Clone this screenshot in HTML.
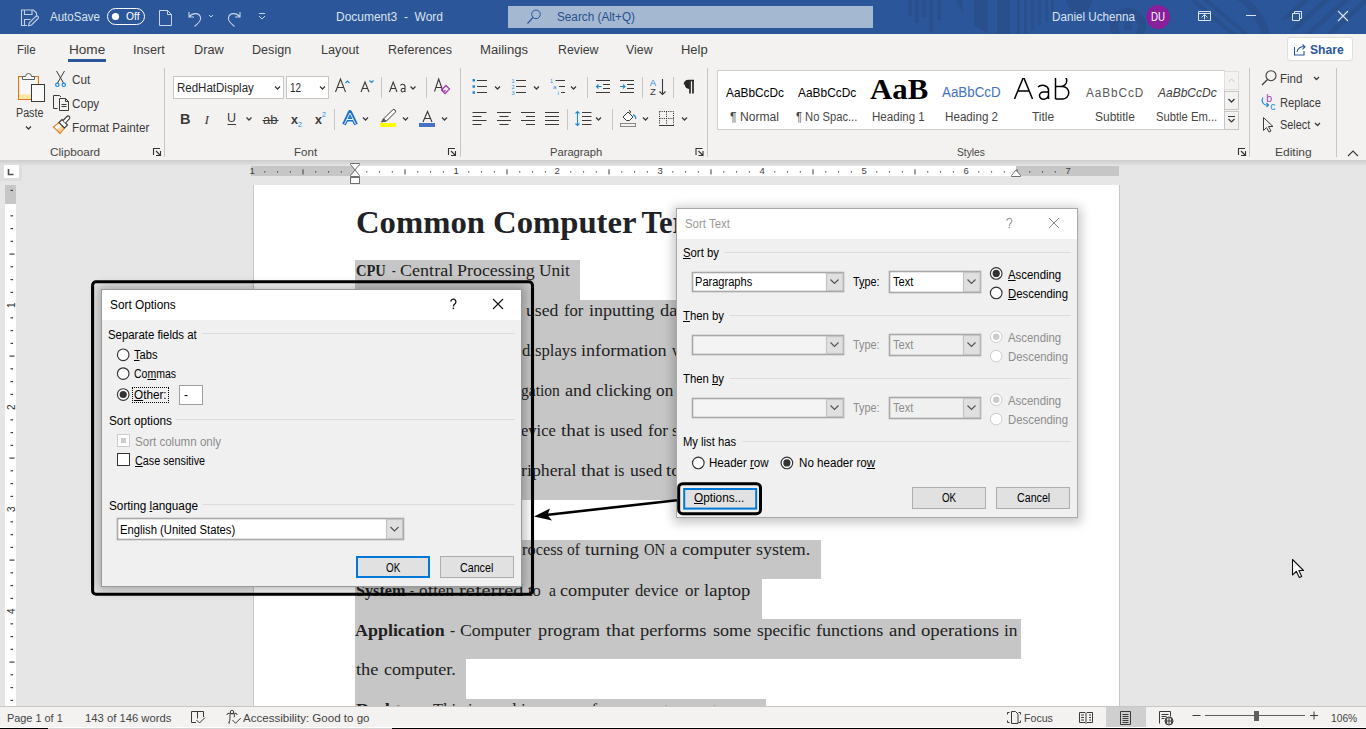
<!DOCTYPE html>
<html><head><meta charset="utf-8">
<style>
*{margin:0;padding:0;box-sizing:border-box}
html,body{width:1366px;height:729px;overflow:hidden;background:#e6e6e6;font-family:"Liberation Sans",sans-serif;color:#262626}
.a{position:absolute}
.t{position:absolute;white-space:nowrap;line-height:1}
#title{left:0;top:0;width:1366px;height:34px;background:#2b579a}
#tabs{left:0;top:34px;width:1366px;height:32px;background:#f3f2f1}
#ribbon{left:0;top:66px;width:1366px;height:94px;background:#f3f2f1}
#status{left:0;top:706px;width:1366px;height:23px;background:#f3f2f1;border-top:1px solid #c8c6c4}
.tw{color:#fff;font-size:12px}
.tab{font-size:12.5px;color:#3b3a39;top:43px}
.glab{font-size:11.5px;color:#484644;top:146px}
.sep{position:absolute;width:1px;background:#c8c6c4}
.page{background:#fff}
.dw{font-family:"Liberation Serif",serif;color:#222}
.hl{position:absolute;background:#c6c6c6}
</style></head><body>
<div id="title" class="a">
<svg class="a" style="left:0;top:0" width="1366" height="34">
 <g fill="#294f8c">
  <rect x="908" y="0" width="4" height="16"/><rect x="915" y="0" width="4" height="23"/><rect x="922" y="0" width="4" height="17"/><rect x="929" y="0" width="4" height="32"/><rect x="937" y="0" width="4" height="20"/>
  <path d="M956 0 L963 0 L963 13.5 Z"/>
  <path d="M974 0 L987.5 0 L987.5 34 L974 25 Z"/>
  <rect x="997" y="0" width="13" height="34"/>
  <rect x="1017" y="0" width="3" height="34"/><rect x="1024" y="0" width="3" height="34"/><rect x="1031" y="0" width="3" height="30"/><rect x="1038" y="0" width="3" height="26"/><rect x="1045" y="0" width="3" height="21"/><rect x="1051" y="0" width="3" height="14"/>
  <circle cx="1079" cy="0" r="13"/>
  <circle cx="1128" cy="26" r="14" fill="none" stroke="#294f8c" stroke-width="8"/>
  <circle cx="1128" cy="26" r="4"/>
  <path d="M1173 0 A60 60 0 0 1 1270 34 L1261 34 A52 52 0 0 0 1183 0 Z"/>
  <path d="M1190 0 L1196 0 L1236 34 L1230 34 Z"/><path d="M1203 0 L1209 0 L1249 34 L1243 34 Z"/>
  <path d="M1280 20 L1302 0 L1309 0 L1287 20 Z"/><path d="M1290 30 L1323 0 L1330 0 L1297 30 Z"/><path d="M1305 34 L1342 0 L1349 0 L1312 34 Z"/><path d="M1326 34 L1363 0 L1366 0 L1366 4 L1333 34 Z"/>
 </g>
 <!-- save icon -->
 <g fill="none" stroke="#c3cfe4" stroke-width="1.1">
  <path d="M27 25.5 h-5.5 v-15.5 h12 l3 3 v4"/>
  <path d="M24.5 10 v4.5 h7.5 v-4.5"/>
  <path d="M24.5 25.5 v-6 h6"/>
  <path d="M28.5 25.8 l0.8 -3 l6.5 -6.5 a1.5 1.5 0 0 1 2.2 2.2 l-6.5 6.5 z"/>
 </g>
 <!-- toggle -->
 <rect x="107.5" y="8.5" width="37" height="16" rx="8" fill="none" stroke="#fff" stroke-width="1"/>
 <circle cx="115.5" cy="16.5" r="3.6" fill="#fff"/>
 <!-- new doc -->
 <path d="M159.5 10.5 h8 l4 4 v11 h-12 z M167.5 10.5 v4 h4" fill="none" stroke="#c9d5ea"/>
 <!-- undo -->
 <path d="M189 12 v5 h5 M189.5 16.5 c3 -4 10 -4 11 1 c1 4 -3 6 -6 9" fill="none" stroke="#c9d5ea" stroke-width="1.1"/>
 <path d="M209 15 l2 2 l2 -2" fill="none" stroke="#c9d5ea"/>
 <!-- redo -->
 <path d="M240 12 v5 h-5 M239.5 16.5 c-3 -4 -10 -4 -11 1 c-1 4 3 6 6 9" fill="none" stroke="#c9d5ea" stroke-width="1.1"/>
 <!-- customize -->
 <path d="M259 13.5 h6 M259 16 l3 3 l3 -3" fill="none" stroke="#c9d5ea"/>
 <!-- search box -->
 <rect x="508" y="6" width="365" height="22" fill="#a5b8d2"/>
 <circle cx="536" cy="14.3" r="4.3" fill="none" stroke="#2b579a" stroke-width="1"/>
 <path d="M533 17.5 L527.5 23.5" stroke="#2b579a" stroke-width="1.2"/>
 <!-- avatar -->
 <circle cx="1158" cy="17" r="12" fill="#8b1e9b"/>
 <!-- ribbon display -->
 <path d="M1198.5 11.5 h12 v9 h-12 z M1198.5 13.5 h12 M1201.5 17.5 l3 -3 l3 3 M1204.5 14.5 v5" fill="none" stroke="#dbe3f0" stroke-width="1"/>
 <path d="M1246 15.5 h10" stroke="#dbe3f0"/>
 <path d="M1292.5 13.5 h7 v7 h-7 z M1294.5 13.5 v-2 h7 v7 h-2" fill="none" stroke="#dbe3f0"/>
 <path d="M1338 11 l10 10 M1348 11 l-10 10" stroke="#dbe3f0" stroke-width="1.1"/>
</svg>
<span class="t tw" style="left:50px;top:10.5px;font-size:12.5px;color:#dbe3f0;transform:scaleX(0.9222);transform-origin:0 0">AutoSave</span>
<span class="t tw" style="left:125.5px;top:11px;font-size:11.5px;transform:scaleX(0.8916);transform-origin:0 0">Off</span>
<span class="t tw" style="left:336px;top:10.5px;font-size:12.5px;color:#dbe3f0;transform:scaleX(0.9586);transform-origin:0 0">Document3&nbsp; -&nbsp; Word</span>
<span class="t tw" style="left:557px;top:10.5px;font-size:12.5px;color:#27508f;transform:scaleX(0.9396);transform-origin:0 0">Search (Alt+Q)</span>
<span class="t tw" style="left:1052px;top:10.5px;font-size:12.5px;color:#dbe3f0;transform:scaleX(0.9331);transform-origin:0 0">Daniel Uchenna</span>
<span class="t tw" style="left:1151px;top:11px;font-size:12px;color:#fff;transform:scaleX(0.8072);transform-origin:0 0">DU</span>
</div>
<div id="tabs" class="a"></div>
<div id="ribbon" class="a"></div>
<span class="t" style="left:17px;top:44.42px;font-size:12.5px;color:#3b3a39;transform:scaleX(0.9228);transform-origin:0 0">File</span>
<span class="t" style="left:68.5px;top:44.42px;font-size:12.5px;color:#3b3a39;transform:scaleX(1.0857);transform-origin:0 0">Home</span>
<span class="t" style="left:133px;top:44.42px;font-size:12.5px;color:#3b3a39;transform:scaleX(1.0139);transform-origin:0 0">Insert</span>
<span class="t" style="left:194.3px;top:44.42px;font-size:12.5px;color:#3b3a39;transform:scaleX(1.0181);transform-origin:0 0">Draw</span>
<span class="t" style="left:252.3px;top:44.42px;font-size:12.5px;color:#3b3a39;transform:scaleX(1.0071);transform-origin:0 0">Design</span>
<span class="t" style="left:321px;top:44.42px;font-size:12.5px;color:#3b3a39;transform:scaleX(1.0125);transform-origin:0 0">Layout</span>
<span class="t" style="left:388px;top:44.42px;font-size:12.5px;color:#3b3a39;transform:scaleX(1.0010);transform-origin:0 0">References</span>
<span class="t" style="left:480.4px;top:44.42px;font-size:12.5px;color:#3b3a39;transform:scaleX(1.0489);transform-origin:0 0">Mailings</span>
<span class="t" style="left:557.8px;top:44.42px;font-size:12.5px;color:#3b3a39;transform:scaleX(0.9854);transform-origin:0 0">Review</span>
<span class="t" style="left:626.2px;top:44.42px;font-size:12.5px;color:#3b3a39;transform:scaleX(0.9898);transform-origin:0 0">View</span>
<span class="t" style="left:681px;top:44.42px;font-size:12.5px;color:#3b3a39;transform:scaleX(1.0382);transform-origin:0 0">Help</span>
<div class="a" style="left:68px;top:59px;width:38px;height:3px;background:#2b579a"></div>
<div class="a" style="left:1287px;top:37px;width:66px;height:24px;background:#fff;border:1px solid #e1dfdd;border-radius:3px"></div>
<span class="t" style="left:1310px;top:44.42px;font-size:12.5px;color:#2b579a;font-weight:bold;transform:scaleX(0.9698);transform-origin:0 0">Share</span>
<span class="t" style="left:49.5px;top:147.27px;font-size:11.5px;color:#484644;transform:scaleX(1.0176);transform-origin:0 0">Clipboard</span>
<span class="t" style="left:293.5px;top:147.27px;font-size:11.5px;color:#484644;transform:scaleX(1.0037);transform-origin:0 0">Font</span>
<span class="t" style="left:550.4px;top:147.27px;font-size:11.5px;color:#484644;transform:scaleX(0.9717);transform-origin:0 0">Paragraph</span>
<span class="t" style="left:956.5px;top:147.27px;font-size:11.5px;color:#484644;transform:scaleX(0.8906);transform-origin:0 0">Styles</span>
<span class="t" style="left:1275px;top:147.27px;font-size:11.5px;color:#484644;transform:scaleX(1.0434);transform-origin:0 0">Editing</span>
<span class="t" style="left:15.6px;top:107.42px;font-size:12.5px;color:#3b3a39;transform:scaleX(0.8571);transform-origin:0 0">Paste</span>
<span class="t" style="left:71.7px;top:74.42px;font-size:12.5px;color:#3b3a39;transform:scaleX(0.9407);transform-origin:0 0">Cut</span>
<span class="t" style="left:71.7px;top:98.42px;font-size:12.5px;color:#3b3a39;transform:scaleX(0.9319);transform-origin:0 0">Copy</span>
<span class="t" style="left:71.7px;top:122.42px;font-size:12.5px;color:#3b3a39;transform:scaleX(0.9362);transform-origin:0 0">Format Painter</span>
<div class="a" style="left:173px;top:76px;width:111px;height:23px;background:#fff;border:1px solid #c8c6c4"></div>
<div class="a" style="left:286px;top:76px;width:43px;height:23px;background:#fff;border:1px solid #c8c6c4"></div>
<span class="t" style="left:176.5px;top:82.42px;font-size:12.5px;color:#262626;transform:scaleX(0.9211);transform-origin:0 0">RedHatDisplay</span>
<span class="t" style="left:289.6px;top:82.42px;font-size:12.5px;color:#262626;transform:scaleX(0.7910);transform-origin:0 0">12</span>
<div class="a" style="left:717px;top:70px;width:522px;height:60px;background:#fff;border:1px solid #d2d0ce"></div>
<div class="a" style="left:1224px;top:70px;width:15px;height:60px;background:#f3f2f1;border-left:1px solid #d2d0ce"></div>
<div class="a" style="left:1224px;top:71px;width:14.5px;height:19px;background:#f3f2f1;border:1px solid #e1dfdd"></div>
<div class="a" style="left:1224px;top:91px;width:14.5px;height:18.5px;background:#f3f2f1;border:1px solid #c8c6c4"></div>
<div class="a" style="left:1224px;top:110.5px;width:14.5px;height:19px;background:#f3f2f1;border:1px solid #c8c6c4"></div>
<span class="t" style="left:729.6px;top:111.42px;font-size:12.5px;color:#484644;transform:scaleX(0.9706);transform-origin:0 0">&para; Normal</span>
<span class="t" style="left:796.2px;top:111.42px;font-size:12.5px;color:#484644;transform:scaleX(0.8941);transform-origin:0 0">&para; No Spac...</span>
<span class="t" style="left:872.4px;top:111.42px;font-size:12.5px;color:#484644;transform:scaleX(0.9246);transform-origin:0 0">Heading 1</span>
<span class="t" style="left:944.5px;top:111.42px;font-size:12.5px;color:#484644;transform:scaleX(0.9316);transform-origin:0 0">Heading 2</span>
<span class="t" style="left:1032.3px;top:111.42px;font-size:12.5px;color:#484644;transform:scaleX(0.9544);transform-origin:0 0">Title</span>
<span class="t" style="left:1095.3px;top:111.42px;font-size:12.5px;color:#484644;transform:scaleX(0.9568);transform-origin:0 0">Subtitle</span>
<span class="t" style="left:1156.2px;top:111.42px;font-size:12.5px;color:#484644;transform:scaleX(0.8988);transform-origin:0 0">Subtle Em...</span>
<span class="t" style="left:726px;top:86.00px;font-size:13.5px;color:#000;transform:scaleX(0.8784);transform-origin:0 0">AaBbCcDc</span>
<span class="t" style="left:797.7px;top:86.00px;font-size:13.5px;color:#000;transform:scaleX(0.8829);transform-origin:0 0">AaBbCcDc</span>
<span class="t" style="left:870.2px;top:73.6px;font-size:30px;color:#000;font-family:'Liberation Serif',serif;font-weight:bold;transform:scaleX(1.0267);transform-origin:0 0">AaB</span>
<span class="t" style="left:941.6px;top:85.15px;font-size:14px;color:#4472c4;transform:scaleX(0.9550);transform-origin:0 0">AaBbCcD</span>
<svg class="a" style="left:1005px;top:78px" width="75" height="24"><g fill="none" stroke="#000" stroke-width="1.5">
<path d="M9.5 21 L18.5 -1 L27.5 21 M13 13 h11"/>
<path d="M33 9 a6 5 0 0 1 10.5 2.5 v9.5 M43.5 14 h-5 a4 3.6 0 0 0 0 7.2 a5 5 0 0 0 5 -4"/>
<path d="M50.5 21 V-3 M50.5 -3 h5.5 a5.6 5.6 0 0 1 0 11.5 h-5.5 M50.5 8.5 h7 a6.2 6.2 0 0 1 0 12.5 h-7"/>
</g></svg>
<span class="t" style="left:1085.7px;top:87.42px;font-size:12.5px;color:#595959;letter-spacing:1px;transform:scaleX(0.9420);transform-origin:0 0">AaBbCcD</span>
<span class="t" style="left:1157.6px;top:86.00px;font-size:13.5px;color:#404040;font-style:italic;transform:scaleX(0.8890);transform-origin:0 0">AaBbCcDc</span>
<span class="t" style="left:1280.4px;top:73.42px;font-size:12.5px;color:#3b3a39;transform:scaleX(0.9207);transform-origin:0 0">Find</span>
<span class="t" style="left:1280.4px;top:97.42px;font-size:12.5px;color:#3b3a39;transform:scaleX(0.8916);transform-origin:0 0">Replace</span>
<span class="t" style="left:1280.4px;top:119.42px;font-size:12.5px;color:#3b3a39;transform:scaleX(0.8691);transform-origin:0 0">Select</span>
<div class="sep" style="left:164px;top:68px;height:89px"></div>
<div class="sep" style="left:460px;top:68px;height:89px"></div>
<div class="sep" style="left:707px;top:68px;height:89px"></div>
<div class="sep" style="left:1249px;top:68px;height:89px"></div>
<div class="sep" style="left:1336px;top:68px;height:89px"></div>
<svg class="a" style="left:0;top:0" width="1366" height="180">
<g fill="none" stroke-width="1">
 <!-- paste -->
 <rect x="18.5" y="76.5" width="20" height="23" fill="#fbe6a6" stroke="#e2761b"/>
 <rect x="19.5" y="77.5" width="18" height="17" fill="#f7f7f7" stroke="none"/>
 <path d="M22.5 79.5 v-3 h3 a2.5 2.5 0 0 1 6 0 h3 v3 z" fill="#f7f7f7" stroke="#5f5f5f"/>
 <rect x="31.5" y="84.5" width="13" height="17" fill="#fafafa" stroke="#3b3a39"/>
 <path d="M26 126.5 l2.5 2.5 l2.5 -2.5" stroke="#3b3a39" stroke-width="1.25"/>
 <!-- cut -->
 <path d="M56.5 71 L63.5 83 M64.5 71 L57.5 83" stroke="#3b3a39"/>
 <circle cx="57.3" cy="84.8" r="1.7" stroke="#1e8bdc" stroke-width="1.2"/>
 <circle cx="63.8" cy="84.8" r="1.7" stroke="#1e8bdc" stroke-width="1.2"/>
 <!-- copy -->
 <path d="M57.5 108.5 h-4 v-13 h6 l1.5 1.5" stroke="#3b3a39"/>
 <path d="M59.5 98.5 h6 l3 3 v9 h-9 z M65.5 98.5 v3 h3 M61.5 104.5 h5 M61.5 106.5 h5" stroke="#3b3a39"/>
 <!-- format painter -->
 <path d="M53.5 127 L59 122.5 L64.5 128 L60 133.5 Z" fill="#f9d29b" stroke="#e2761b" stroke-width="1.1"/>
 <path d="M54.5 127 L59 123.5 L61.5 126 L56.5 129.5 Z" fill="#fff" stroke="none"/>
 <path d="M59 122.5 L62 119.5 L67.5 125 L64.5 128 Z" fill="#fff" stroke="#3b3a39" stroke-width="1.1"/>
 <path d="M63 120.5 L67 116.5 A1.5 1.5 0 0 1 69.3 118.8 L65.5 123" fill="#fff" stroke="#3b3a39" stroke-width="1.1"/>
 <!-- font combo chevrons -->
 <path d="M275 86.5 l2.5 2.5 l2.5 -2.5 M320 86.5 l2.5 2.5 l2.5 -2.5" stroke="#3b3a39" stroke-width="1.25"/>
 <!-- grow/shrink -->
 <path d="M335.5 92 L340.5 79 L345.5 92 M337.3 87.5 h6.4" stroke="#3b3a39" stroke-width="1.1"/>
 <path d="M345.5 83 l2 -2 l2 2" stroke="#1e8bdc" stroke-width="1.2"/>
 <path d="M361 92 L365 82 L369 92 M362.5 88.5 h5" stroke="#3b3a39" stroke-width="1.1"/>
 <path d="M369.5 80.5 l2 2 l2 -2" stroke="#1e8bdc" stroke-width="1.2"/>
 <path d="M381.5 77 v21" stroke="#c8c6c4"/>
 <path d="M389.5 92 L393.2 82 L397 92 M390.8 88.5 h5" stroke="#3b3a39" stroke-width="1.1"/>
 <path d="M400.5 85.5 a2.5 2.5 0 0 1 4.5 0.5 v6 M405 88.5 h-2.5 a1.8 1.8 0 0 0 0 3.5 a2.5 2.5 0 0 0 2.5 -2" stroke="#3b3a39" stroke-width="1.1"/>
 <path d="M410.5 86.5 l2.5 2.5 l2.5 -2.5" stroke="#3b3a39" stroke-width="1.25"/>
 <path d="M426.5 77 v21" stroke="#c8c6c4"/>
 <path d="M434.5 91.5 L438.7 79 L443 91.5 M436 87.5 h5" stroke="#3b3a39" stroke-width="1.1"/>
 <path d="M441.5 90 L446 85.5 L449.5 89 L445 93.5 Z M443.5 92 l2 -2" stroke="#a33bb5" stroke-width="1.3"/>
 <!-- row 2 -->
 <path d="M334.5 109 v21" stroke="#c8c6c4"/>
 <path d="M246.5 117.5 l2.5 2.5 l2.5 -2.5 M363 117.5 l2.5 2.5 l2.5 -2.5 M403 117.5 l2.5 2.5 l2.5 -2.5 M442 117.5 l2.5 2.5 l2.5 -2.5" stroke="#3b3a39" stroke-width="1.25"/>
 <path d="M227.5 124.5 h8.5" stroke="#3b3a39"/>
 <path d="M262.5 120.5 h16" stroke="#3b3a39"/>
 <path d="M344 124.5 L350 112 L356 124.5 M346.8 119.5 h6.4" stroke="#1a6fc9" stroke-width="4" stroke-linejoin="round"/>
 <path d="M344.5 124 L350 113 L355.5 124 M347 119.5 h6" stroke="#e8f3fd" stroke-width="1"/>
 <path d="M382 121.5 l2 -3 l8.5 -8.5 a1.5 1.5 0 0 1 2.5 2.5 l-8.5 8.5 z" fill="#fff" stroke="#3b3a39"/>
 <path d="M381.5 122 l2 -3.5 l2.5 2.5 z" fill="#5f5f5f" stroke="#5f5f5f"/>
 <rect x="380" y="123" width="16" height="4" fill="#ffff00" stroke="none"/>
 <path d="M423 122 L427.5 111.5 L432 122 M424.5 118.5 h6" stroke="#3b3a39" stroke-width="1.1"/>
 <rect x="419" y="123" width="16" height="4" fill="#4472c4" stroke="none"/>
 <!-- paragraph row1 -->
 <g fill="#1e8bdc" stroke="none"><rect x="472.5" y="79" width="2.5" height="2.5"/><rect x="472.5" y="85.3" width="2.5" height="2.5"/><rect x="472.5" y="91.3" width="2.5" height="2.5"/></g>
 <path d="M477 80.5 h10 M477 86.5 h10 M477 92.5 h10" stroke="#3b3a39"/>
 <path d="M495 86.5 l2.5 2.5 l2.5 -2.5 M534 86.5 l2.5 2.5 l2.5 -2.5 M571 86.5 l2.5 2.5 l2.5 -2.5" stroke="#3b3a39" stroke-width="1.25"/>
 <path d="M516 80.5 h10 M516 86.5 h10 M516 92.5 h10" stroke="#3b3a39"/>
 <path d="M555.5 80.5 h9.5 M559 86.5 h6 M561 92.5 h4" stroke="#3b3a39"/>
 <path d="M587.5 77 v21 M642.5 77 v21 M673.5 77 v21" stroke="#c8c6c4"/>
 <path d="M596 80.5 h14 M603 84.5 h7 M603 88.5 h7 M596 92.5 h14" stroke="#3b3a39"/>
 <path d="M601.5 86.5 h-5 M598.5 84.5 l-2 2 l2 2" stroke="#1e8bdc" stroke-width="1.1"/>
 <path d="M620 80.5 h14 M627 84.5 h7 M627 88.5 h7 M620 92.5 h14" stroke="#3b3a39"/>
 <path d="M620 86.5 h5 M623 84.5 l2 2 l-2 2" stroke="#1e8bdc" stroke-width="1.1"/>
 <path d="M662.5 79 v15.5 M659.5 91.5 l3 3 l3 -3" stroke="#3b3a39" stroke-width="1.1"/>
 <path d="M472.5 112.5 h14 M472.5 116.5 h9 M472.5 120.5 h14 M472.5 124.5 h9" stroke="#3b3a39"/>
 <path d="M497 112.5 h14 M499.5 116.5 h9 M497 120.5 h14 M499.5 124.5 h9" stroke="#3b3a39"/>
 <path d="M521 112.5 h14 M526 116.5 h9 M521 120.5 h14 M526 124.5 h9" stroke="#3b3a39"/>
 <path d="M545 112.5 h14 M545 116.5 h14 M545 120.5 h14 M545 124.5 h14" stroke="#3b3a39"/>
 <path d="M567.5 109 v21 M612.5 109 v21" stroke="#c8c6c4"/>
 <path d="M577.5 111.5 v14 M575.5 113.5 l2 -2 l2 2 M575.5 123.5 l2 2 l2 -2" stroke="#1e8bdc" stroke-width="1.1"/>
 <path d="M582 112.5 h9.5 M582 116.5 h9.5 M582 120.5 h9.5 M582 124.5 h9.5" stroke="#3b3a39"/>
 <path d="M596 117.5 l2.5 2.5 l2.5 -2.5 M643 117.5 l2.5 2.5 l2.5 -2.5 M682 117.5 l2.5 2.5 l2.5 -2.5" stroke="#3b3a39" stroke-width="1.25"/>
 <path d="M623 117 l5 -5 l5 5 l-3.5 3.5 h-3 z" fill="#fff" stroke="#3b3a39"/>
 <path d="M629 110.5 a1 1 0 0 1 0 3" stroke="#3b3a39"/>
 <path d="M633 115 a3 3 0 0 1 2.5 4" stroke="#1e8bdc" stroke-width="1.3"/>
 <rect x="620.5" y="123.5" width="15" height="3" fill="#f3f2f1" stroke="#8a8886"/>
 <path d="M659.5 111.5 h14 v13 M659.5 111.5 v13 M666.5 111.5 v13 M659.5 118.5 h14" stroke="#222" stroke-dasharray="1 1.2"/>
 <path d="M659 125.5 h15" stroke="#3b3a39"/>
 <path d="M690 80.5 v13 M693 80.5 v13 M684.5 84.5 a4 4 0 0 1 4 -4 h5.5" stroke="#262626" stroke-width="1.7"/>
 <path d="M689 80.6 a3.8 3.9 0 0 0 0 7.8 z" fill="#262626" stroke="#262626"/>
 <!-- styles gallery arrows -->
 <path d="M1228.5 82 l3 -3 l3 3" stroke="#c8c6c4"/>
 <path d="M1228.5 99 l3 3 l3 -3" stroke="#3b3a39" stroke-width="1.3"/>
 <path d="M1228 116.5 h7 M1228.5 119 l3 3 l3 -3" stroke="#3b3a39" stroke-width="1.2"/>
 <!-- launchers -->
 <path d="M153.5 155.0 V148.5 H160.0 M156.0 151.0 L160.0 155.0 M160.5 151.0 V155.5 H156.0" stroke="#333" stroke-width="1.1"/>
 <path d="M448.5 155.0 V148.5 H455.0 M451.0 151.0 L455.0 155.0 M455.5 151.0 V155.5 H451.0" stroke="#333" stroke-width="1.1"/>
 <path d="M696 155.0 V148.5 H702.5 M698.5 151.0 L702.5 155.0 M703 151.0 V155.5 H698.5" stroke="#333" stroke-width="1.1"/>
 <path d="M1238.5 155.0 V148.5 H1245.0 M1241.0 151.0 L1245.0 155.0 M1245.5 151.0 V155.5 H1241.0" stroke="#333" stroke-width="1.1"/>
 <!-- editing -->
 <circle cx="1271" cy="75.7" r="5" stroke="#3b3a39" stroke-width="1.1"/>
 <path d="M1267.5 79.5 L1262 85" stroke="#3b3a39" stroke-width="1.2"/>
 <path d="M1314 77 l2.5 2.5 l2.5 -2.5 M1315 123 l2.5 2.5 l2.5 -2.5" stroke="#3b3a39" stroke-width="1.25"/>
 <path d="M1263 97.5 a5 5 0 0 0 2.5 7.5 h3 M1266.5 103 l2 2 l-2 2" stroke="#1e8bdc" stroke-width="1.2"/>
 <path d="M1263.5 117.5 v13 l3 -3 l2.5 4.5 l2 -1 l-2.5 -4.5 h4.5 z" stroke="#3b3a39"/>
 <path d="M1348 156 l5 -5 l5 5" stroke="#3b3a39" stroke-width="1.1"/>
 <!-- share icon -->
 <path d="M1294.5 47 v8 h9.5 v-4" stroke="#2b579a" stroke-width="1.1"/>
 <path d="M1297 52 a6 6 0 0 1 7.5 -5 M1302.5 44.5 l2.5 2.3 l-2.5 2.5" stroke="#2b579a" stroke-width="1.1"/>
</g>
<g font-family="Liberation Sans" fill="#3b3a39">
 <text x="180" y="123.5" font-size="14.5" font-weight="bold">B</text>
 <text x="204.5" y="123.5" font-size="13.5" font-style="italic" font-family="Liberation Serif">I</text>
 <text x="227" y="121.5" font-size="12.5">U</text>
 <text x="263" y="124" font-size="13">ab</text>
 <text x="291" y="123.5" font-size="12.5" font-weight="bold">x</text>
 <text x="298" y="127" font-size="7" fill="#1e8bdc">2</text>
 <text x="315" y="123.5" font-size="12.5" font-weight="bold">x</text>
 <text x="322" y="117" font-size="7" fill="#1e8bdc">2</text>
 <text x="649.8" y="85.6" font-size="9.6" fill="#1e8bdc">A</text>
 <text x="650" y="95.2" font-size="9.6">Z</text>
 
 <text x="511.5" y="83" font-size="5.5" fill="#1e8bdc">1</text>
 <text x="511.5" y="89" font-size="5.5" fill="#1e8bdc">2</text>
 <text x="511.5" y="95" font-size="5.5" fill="#1e8bdc">3</text>
 <text x="550" y="83" font-size="5.5" fill="#1e8bdc">1</text>
 <text x="553" y="89" font-size="6" fill="#1e8bdc">a</text>
 <text x="557.5" y="95" font-size="6" fill="#1e8bdc">i</text>
 <text x="1266.3" y="101.5" font-size="10.5" fill="#a33bb5">b</text>
 <text x="1270.3" y="109.5" font-size="10.5" fill="#1e8bdc">c</text>
</g>
</svg>
<!-- document area -->
<div class="a" style="left:0;top:160px;width:1366px;height:6px;background:linear-gradient(#cdcdcd,#d8d8d8 50%,#e6e6e6)"></div>
<div class="a" style="left:0px;top:163px;width:22px;height:18px;background:#dedede"></div>
<div class="a" style="left:3.5px;top:165px;width:15px;height:13px;background:#fff"></div>
<svg class="a" style="left:0;top:160px" width="1366" height="30"><path d="M8.5 9 v5.5 h5" stroke="#505050" stroke-width="1.6" fill="none"/>
<rect x="251" y="6" width="103" height="10" fill="#c6c6c6"/><rect x="354" y="6" width="662" height="10" fill="#fff"/><rect x="1016" y="6" width="103" height="10" fill="#c6c6c6"/>
<rect x="264.2" y="11.2" width="1.1" height="1.3" fill="#404040"/><rect x="277.0" y="11.2" width="1.1" height="1.3" fill="#404040"/><rect x="289.8" y="11.2" width="1.1" height="1.3" fill="#404040"/><rect x="302.5" y="9.3" width="1" height="5.2" fill="#404040"/><rect x="315.2" y="11.2" width="1.1" height="1.3" fill="#404040"/><rect x="328.0" y="11.2" width="1.1" height="1.3" fill="#404040"/><rect x="340.8" y="11.2" width="1.1" height="1.3" fill="#404040"/><rect x="366.2" y="11.2" width="1.1" height="1.3" fill="#404040"/><rect x="379.0" y="11.2" width="1.1" height="1.3" fill="#404040"/><rect x="391.8" y="11.2" width="1.1" height="1.3" fill="#404040"/><rect x="404.5" y="9.3" width="1" height="5.2" fill="#404040"/><rect x="417.2" y="11.2" width="1.1" height="1.3" fill="#404040"/><rect x="430.0" y="11.2" width="1.1" height="1.3" fill="#404040"/><rect x="442.8" y="11.2" width="1.1" height="1.3" fill="#404040"/><rect x="468.2" y="11.2" width="1.1" height="1.3" fill="#404040"/><rect x="481.0" y="11.2" width="1.1" height="1.3" fill="#404040"/><rect x="493.8" y="11.2" width="1.1" height="1.3" fill="#404040"/><rect x="506.5" y="9.3" width="1" height="5.2" fill="#404040"/><rect x="519.2" y="11.2" width="1.1" height="1.3" fill="#404040"/><rect x="532.0" y="11.2" width="1.1" height="1.3" fill="#404040"/><rect x="544.8" y="11.2" width="1.1" height="1.3" fill="#404040"/><rect x="570.2" y="11.2" width="1.1" height="1.3" fill="#404040"/><rect x="583.0" y="11.2" width="1.1" height="1.3" fill="#404040"/><rect x="595.8" y="11.2" width="1.1" height="1.3" fill="#404040"/><rect x="608.5" y="9.3" width="1" height="5.2" fill="#404040"/><rect x="621.2" y="11.2" width="1.1" height="1.3" fill="#404040"/><rect x="634.0" y="11.2" width="1.1" height="1.3" fill="#404040"/><rect x="646.8" y="11.2" width="1.1" height="1.3" fill="#404040"/><rect x="672.2" y="11.2" width="1.1" height="1.3" fill="#404040"/><rect x="685.0" y="11.2" width="1.1" height="1.3" fill="#404040"/><rect x="697.8" y="11.2" width="1.1" height="1.3" fill="#404040"/><rect x="710.5" y="9.3" width="1" height="5.2" fill="#404040"/><rect x="723.2" y="11.2" width="1.1" height="1.3" fill="#404040"/><rect x="736.0" y="11.2" width="1.1" height="1.3" fill="#404040"/><rect x="748.8" y="11.2" width="1.1" height="1.3" fill="#404040"/><rect x="774.2" y="11.2" width="1.1" height="1.3" fill="#404040"/><rect x="787.0" y="11.2" width="1.1" height="1.3" fill="#404040"/><rect x="799.8" y="11.2" width="1.1" height="1.3" fill="#404040"/><rect x="812.5" y="9.3" width="1" height="5.2" fill="#404040"/><rect x="825.2" y="11.2" width="1.1" height="1.3" fill="#404040"/><rect x="838.0" y="11.2" width="1.1" height="1.3" fill="#404040"/><rect x="850.8" y="11.2" width="1.1" height="1.3" fill="#404040"/><rect x="876.2" y="11.2" width="1.1" height="1.3" fill="#404040"/><rect x="889.0" y="11.2" width="1.1" height="1.3" fill="#404040"/><rect x="901.8" y="11.2" width="1.1" height="1.3" fill="#404040"/><rect x="914.5" y="9.3" width="1" height="5.2" fill="#404040"/><rect x="927.2" y="11.2" width="1.1" height="1.3" fill="#404040"/><rect x="940.0" y="11.2" width="1.1" height="1.3" fill="#404040"/><rect x="952.8" y="11.2" width="1.1" height="1.3" fill="#404040"/><rect x="978.2" y="11.2" width="1.1" height="1.3" fill="#404040"/><rect x="991.0" y="11.2" width="1.1" height="1.3" fill="#404040"/><rect x="1003.8" y="11.2" width="1.1" height="1.3" fill="#404040"/><rect x="1016.5" y="9.3" width="1" height="5.2" fill="#404040"/><rect x="1029.2" y="11.2" width="1.1" height="1.3" fill="#404040"/><rect x="1042.0" y="11.2" width="1.1" height="1.3" fill="#404040"/><rect x="1054.8" y="11.2" width="1.1" height="1.3" fill="#404040"/>
</svg>
<span class="t" style="left:249.5px;top:166px;font-size:9.5px;color:#404040">1</span>
<span class="t" style="left:453.5px;top:166px;font-size:9.5px;color:#404040">1</span>
<span class="t" style="left:554.5px;top:166px;font-size:9.5px;color:#404040">2</span>
<span class="t" style="left:657.5px;top:166px;font-size:9.5px;color:#404040">3</span>
<span class="t" style="left:759.5px;top:166px;font-size:9.5px;color:#404040">4</span>
<span class="t" style="left:861.5px;top:166px;font-size:9.5px;color:#404040">5</span>
<span class="t" style="left:963.5px;top:166px;font-size:9.5px;color:#404040">6</span>
<span class="t" style="left:1065.5px;top:166px;font-size:9.5px;color:#404040">7</span>
<svg class="a" style="left:345px;top:160px" width="20" height="28">
<path d="M5.5 3.5 h9 v1 l-4.5 5.5 l-4.5 -5.5 z M5.5 16.5 h9 v-1 l-4.5 -5.5 l-4.5 5.5 z" fill="#fff" stroke="#707070"/>
<rect x="5.5" y="17.5" width="9" height="6" fill="#fff" stroke="#707070"/>
</svg>
<svg class="a" style="left:1007px;top:160px" width="20" height="28">
<path d="M4.5 16.5 h9 v-1 l-4.5 -5.5 l-4.5 5.5 z" fill="#fff" stroke="#707070"/>
</svg>
<svg class="a" style="left:0;top:180px" width="22" height="526"><rect x="5" y="5" width="11" height="19" fill="#c6c6c6"/><rect x="5" y="24" width="11" height="502" fill="#fff"/><rect x="10.5" y="9.8" width="2.5" height="1.2" fill="#404040"/><rect x="10.5" y="35.2" width="2.5" height="1.2" fill="#404040"/><rect x="10.5" y="48.0" width="2.5" height="1.2" fill="#404040"/><rect x="10.5" y="60.8" width="2.5" height="1.2" fill="#404040"/><rect x="9.5" y="73.5" width="5" height="1.2" fill="#404040"/><rect x="10.5" y="86.2" width="2.5" height="1.2" fill="#404040"/><rect x="10.5" y="99.0" width="2.5" height="1.2" fill="#404040"/><rect x="10.5" y="111.8" width="2.5" height="1.2" fill="#404040"/><rect x="10.5" y="137.2" width="2.5" height="1.2" fill="#404040"/><rect x="10.5" y="150.0" width="2.5" height="1.2" fill="#404040"/><rect x="10.5" y="162.8" width="2.5" height="1.2" fill="#404040"/><rect x="9.5" y="175.5" width="5" height="1.2" fill="#404040"/><rect x="10.5" y="188.2" width="2.5" height="1.2" fill="#404040"/><rect x="10.5" y="201.0" width="2.5" height="1.2" fill="#404040"/><rect x="10.5" y="213.8" width="2.5" height="1.2" fill="#404040"/><rect x="10.5" y="239.2" width="2.5" height="1.2" fill="#404040"/><rect x="10.5" y="252.0" width="2.5" height="1.2" fill="#404040"/><rect x="10.5" y="264.8" width="2.5" height="1.2" fill="#404040"/><rect x="9.5" y="277.5" width="5" height="1.2" fill="#404040"/><rect x="10.5" y="290.2" width="2.5" height="1.2" fill="#404040"/><rect x="10.5" y="303.0" width="2.5" height="1.2" fill="#404040"/><rect x="10.5" y="315.8" width="2.5" height="1.2" fill="#404040"/><rect x="10.5" y="341.2" width="2.5" height="1.2" fill="#404040"/><rect x="10.5" y="354.0" width="2.5" height="1.2" fill="#404040"/><rect x="10.5" y="366.8" width="2.5" height="1.2" fill="#404040"/><rect x="9.5" y="379.5" width="5" height="1.2" fill="#404040"/><rect x="10.5" y="392.2" width="2.5" height="1.2" fill="#404040"/><rect x="10.5" y="405.0" width="2.5" height="1.2" fill="#404040"/><rect x="10.5" y="417.8" width="2.5" height="1.2" fill="#404040"/><rect x="10.5" y="443.2" width="2.5" height="1.2" fill="#404040"/><rect x="10.5" y="456.0" width="2.5" height="1.2" fill="#404040"/><rect x="10.5" y="468.8" width="2.5" height="1.2" fill="#404040"/><rect x="9.5" y="481.5" width="5" height="1.2" fill="#404040"/><rect x="10.5" y="494.2" width="2.5" height="1.2" fill="#404040"/><rect x="10.5" y="507.0" width="2.5" height="1.2" fill="#404040"/><rect x="10.5" y="519.8" width="2.5" height="1.2" fill="#404040"/></svg>
<span class="t" style="left:5.5px;top:298.8px;font-size:10px;color:#303030;transform:rotate(-90deg);transform-origin:5px 4px;width:10px">1</span>
<span class="t" style="left:5.5px;top:400.8px;font-size:10px;color:#303030;transform:rotate(-90deg);transform-origin:5px 4px;width:10px">2</span>
<span class="t" style="left:5.5px;top:502.8px;font-size:10px;color:#303030;transform:rotate(-90deg);transform-origin:5px 4px;width:10px">3</span>
<span class="t" style="left:5.5px;top:604.8px;font-size:10px;color:#303030;transform:rotate(-90deg);transform-origin:5px 4px;width:10px">4</span>

<div class="a page" style="left:254px;top:185px;width:865px;height:521px"></div>
<div class="a" style="left:253px;top:185px;width:1px;height:521px;background:#c6c6c6"></div>
<div class="a" style="left:1119px;top:185px;width:1px;height:521px;background:#c6c6c6"></div>
<div class="hl" style="left:355px;top:260px;width:225px;height:40px"></div>
<div class="hl" style="left:355px;top:300px;width:665px;height:200px"></div>
<div class="hl" style="left:355px;top:540px;width:466px;height:39px"></div>
<div class="hl" style="left:355px;top:579px;width:407px;height:40px"></div>
<div class="hl" style="left:355px;top:619px;width:666px;height:40px"></div>
<div class="hl" style="left:355px;top:659px;width:111px;height:40px"></div>
<div class="hl" style="left:355px;top:699px;width:411px;height:7px"></div>
<span class="t" style="left:356px;top:207.60px;font-size:30.5px;color:#1f2328;font-family:'Liberation Serif',serif;font-weight:bold;transform:scaleX(1.0715);transform-origin:0 0">Common Computer</span>
<span class="t" style="left:641.5px;top:207.60px;font-size:30.5px;color:#1f2328;font-family:'Liberation Serif',serif;font-weight:bold">Terms</span>
<span class="t dw" style="left:356.3px;top:262.07px;font-size:17.4px;font-weight:bold;transform:scaleX(0.8336);transform-origin:0 0">CPU</span>
<span class="t dw" style="left:392.2px;top:262.07px;font-size:17.4px;transform:scaleX(0.6210);transform-origin:0 0">-</span>
<span class="t dw" style="left:400.1px;top:262.07px;font-size:17.4px;transform:scaleX(1.0393);transform-origin:0 0">Central</span>
<span class="t dw" style="left:457.3px;top:262.07px;font-size:17.4px;transform:scaleX(1.0311);transform-origin:0 0">Processing</span>
<span class="t dw" style="left:539px;top:262.07px;font-size:17.4px;transform:scaleX(0.9961);transform-origin:0 0">Unit</span>
<span class="t dw" style="left:525.8px;top:302.17px;font-size:17.4px;transform:scaleX(1.0160);transform-origin:0 0">used</span>
<span class="t dw" style="left:564px;top:302.17px;font-size:17.4px;transform:scaleX(0.9565);transform-origin:0 0">for</span>
<span class="t dw" style="left:589.2px;top:302.17px;font-size:17.4px;transform:scaleX(1.0396);transform-origin:0 0">inputting</span>
<span class="t dw" style="left:659.5px;top:302.17px;font-size:17.4px;transform:scaleX(1.0529);transform-origin:0 0">data</span>
<span class="t dw" style="left:521.5px;top:342.17px;font-size:17.4px;transform:scaleX(0.9594);transform-origin:0 0">displays</span>
<span class="t dw" style="left:581.3px;top:342.17px;font-size:17.4px;transform:scaleX(1.0437);transform-origin:0 0">information</span>
<span class="t dw" style="left:672px;top:342.17px;font-size:17.4px;transform:scaleX(0.8715);transform-origin:0 0">visually</span>
<span class="t dw" style="left:520.8px;top:382.17px;font-size:17.4px;transform:scaleX(0.8949);transform-origin:0 0">gation</span>
<span class="t dw" style="left:564.7px;top:382.17px;font-size:17.4px;transform:scaleX(1.0468);transform-origin:0 0">and</span>
<span class="t dw" style="left:595.7px;top:382.17px;font-size:17.4px;transform:scaleX(0.9905);transform-origin:0 0">clicking</span>
<span class="t dw" style="left:655.5px;top:382.17px;font-size:17.4px;transform:scaleX(0.9948);transform-origin:0 0">on</span>
<span class="t dw" style="left:678px;top:382.17px;font-size:17.4px;transform:scaleX(0.9022);transform-origin:0 0">items</span>
<span class="t dw" style="left:521.2px;top:421.77px;font-size:17.4px;transform:scaleX(0.9486);transform-origin:0 0">evice</span>
<span class="t dw" style="left:561px;top:421.77px;font-size:17.4px;transform:scaleX(1.1005);transform-origin:0 0">that</span>
<span class="t dw" style="left:594px;top:421.77px;font-size:17.4px;transform:scaleX(0.9389);transform-origin:0 0">is</span>
<span class="t dw" style="left:610.2px;top:421.77px;font-size:17.4px;transform:scaleX(1.0160);transform-origin:0 0">used</span>
<span class="t dw" style="left:647.5px;top:421.77px;font-size:17.4px;transform:scaleX(0.9861);transform-origin:0 0">for</span>
<span class="t dw" style="left:672.4px;top:421.77px;font-size:17.4px;transform:scaleX(0.9853);transform-origin:0 0">storing</span>
<span class="t dw" style="left:521.2px;top:461.57px;font-size:17.4px;transform:scaleX(1.0244);transform-origin:0 0">ripheral</span>
<span class="t dw" style="left:581px;top:461.57px;font-size:17.4px;transform:scaleX(1.0967);transform-origin:0 0">that</span>
<span class="t dw" style="left:614px;top:461.57px;font-size:17.4px;transform:scaleX(0.9044);transform-origin:0 0">is</span>
<span class="t dw" style="left:629.5px;top:461.57px;font-size:17.4px;transform:scaleX(1.0160);transform-origin:0 0">used</span>
<span class="t dw" style="left:666.2px;top:461.57px;font-size:17.4px;transform:scaleX(1.0938);transform-origin:0 0">to</span>
<span class="t dw" style="left:521.7px;top:541.37px;font-size:17.4px;transform:scaleX(0.9432);transform-origin:0 0">rocess</span>
<span class="t dw" style="left:567.4px;top:541.37px;font-size:17.4px;transform:scaleX(0.8897);transform-origin:0 0">of</span>
<span class="t dw" style="left:585px;top:541.37px;font-size:17.4px;transform:scaleX(1.0706);transform-origin:0 0">turning</span>
<span class="t dw" style="left:643.5px;top:541.37px;font-size:17.4px;transform:scaleX(0.8398);transform-origin:0 0">ON</span>
<span class="t dw" style="left:669.8px;top:541.37px;font-size:17.4px;transform:scaleX(0.9051);transform-origin:0 0">a</span>
<span class="t dw" style="left:682.2px;top:541.37px;font-size:17.4px;transform:scaleX(1.0520);transform-origin:0 0">computer</span>
<span class="t dw" style="left:756px;top:541.37px;font-size:17.4px;transform:scaleX(1.0312);transform-origin:0 0">system.</span>
<span class="t dw" style="left:355.5px;top:581.57px;font-size:17.4px;font-weight:bold;transform:scaleX(0.9315);transform-origin:0 0">System</span>
<span class="t dw" style="left:410px;top:581.57px;font-size:17.4px;transform:scaleX(0.6900);transform-origin:0 0">-</span>
<span class="t dw" style="left:419px;top:581.57px;font-size:17.4px;transform:scaleX(0.9794);transform-origin:0 0">often</span>
<span class="t dw" style="left:459px;top:581.57px;font-size:17.4px;transform:scaleX(1.1721);transform-origin:0 0">referred</span>
<span class="t dw" style="left:527.6px;top:581.57px;font-size:17.4px;transform:scaleX(0.9533);transform-origin:0 0">to</span>
<span class="t dw" style="left:548.7px;top:581.57px;font-size:17.4px;transform:scaleX(0.9051);transform-origin:0 0">a</span>
<span class="t dw" style="left:560.4px;top:581.57px;font-size:17.4px;transform:scaleX(1.0520);transform-origin:0 0">computer</span>
<span class="t dw" style="left:635.3px;top:581.57px;font-size:17.4px;transform:scaleX(0.9561);transform-origin:0 0">device</span>
<span class="t dw" style="left:684.5px;top:581.57px;font-size:17.4px;transform:scaleX(0.9724);transform-origin:0 0">or</span>
<span class="t dw" style="left:704.4px;top:581.57px;font-size:17.4px;transform:scaleX(1.0674);transform-origin:0 0">laptop</span>
<span class="t dw" style="left:355.1px;top:621.57px;font-size:17.4px;font-weight:bold;transform:scaleX(1.0312);transform-origin:0 0">Application</span>
<span class="t dw" style="left:449.9px;top:621.57px;font-size:17.4px;transform:scaleX(0.8798);transform-origin:0 0">-</span>
<span class="t dw" style="left:460.2px;top:621.57px;font-size:17.4px;transform:scaleX(1.0235);transform-origin:0 0">Computer</span>
<span class="t dw" style="left:537.8px;top:621.57px;font-size:17.4px;transform:scaleX(1.0522);transform-origin:0 0">program</span>
<span class="t dw" style="left:605.7px;top:621.57px;font-size:17.4px;transform:scaleX(1.1005);transform-origin:0 0">that</span>
<span class="t dw" style="left:640.3px;top:621.57px;font-size:17.4px;transform:scaleX(1.0576);transform-origin:0 0">performs</span>
<span class="t dw" style="left:712.5px;top:621.57px;font-size:17.4px;transform:scaleX(1.0403);transform-origin:0 0">some</span>
<span class="t dw" style="left:756.6px;top:621.57px;font-size:17.4px;transform:scaleX(0.9949);transform-origin:0 0">specific</span>
<span class="t dw" style="left:815.5px;top:621.57px;font-size:17.4px;transform:scaleX(1.0381);transform-origin:0 0">functions</span>
<span class="t dw" style="left:888.6px;top:621.57px;font-size:17.4px;transform:scaleX(1.0706);transform-origin:0 0">and</span>
<span class="t dw" style="left:920.6px;top:621.57px;font-size:17.4px;transform:scaleX(1.0779);transform-origin:0 0">operations</span>
<span class="t dw" style="left:1003.9px;top:621.57px;font-size:17.4px;transform:scaleX(0.9977);transform-origin:0 0">in</span>
<span class="t dw" style="left:355.5px;top:661.07px;font-size:17.4px;transform:scaleX(1.0588);transform-origin:0 0">the</span>
<span class="t dw" style="left:383.5px;top:661.07px;font-size:17.4px;transform:scaleX(1.0396);transform-origin:0 0">computer.</span>
<span class="t dw" style="left:355.5px;top:701.07px;font-size:17.4px;font-weight:bold;transform:scaleX(1.0593);transform-origin:0 0">Desktop</span>
<span class="t dw" style="left:425px;top:701.07px;font-size:17.4px;transform:scaleX(0.6900);transform-origin:0 0">-</span>
<span class="t dw" style="left:433.4px;top:701.07px;font-size:17.4px;transform:scaleX(0.9573);transform-origin:0 0">This</span>
<span class="t dw" style="left:468px;top:701.07px;font-size:17.4px;transform:scaleX(0.9475);transform-origin:0 0">is</span>
<span class="t dw" style="left:484.5px;top:701.07px;font-size:17.4px;transform:scaleX(1.0092);transform-origin:0 0">working</span>
<span class="t dw" style="left:548px;top:701.07px;font-size:17.4px;transform:scaleX(1.0362);transform-origin:0 0">area</span>
<span class="t dw" style="left:583px;top:701.07px;font-size:17.4px;transform:scaleX(0.9655);transform-origin:0 0">of</span>
<span class="t dw" style="left:602px;top:701.07px;font-size:17.4px;transform:scaleX(0.9051);transform-origin:0 0">a</span>
<span class="t dw" style="left:614px;top:701.07px;font-size:17.4px;transform:scaleX(1.0504);transform-origin:0 0">computer</span>
<span class="t dw" style="left:688px;top:701.07px;font-size:17.4px;transform:scaleX(1.0763);transform-origin:0 0">system</span>
<!-- SORT OPTIONS DIALOG -->
<div class="a" style="left:101px;top:289px;width:421px;height:298px;background:#f0f0f0;border:1px solid #9a9a9a;box-shadow:0 0 10px 3px rgba(0,0,0,0.28)"></div>
<div class="a" style="left:102px;top:290px;width:419px;height:30px;background:#fff"></div>
<span class="t" style="left:110.1px;top:299.24px;font-size:12px;color:#000;transform:scaleX(0.9850);transform-origin:0 0">Sort Options</span>
<svg class="a" style="left:0;top:0" width="1366" height="729" fill="none">
 <path d="M493 299 l10 10 M503 299 l-10 10" stroke="#111" stroke-width="1.1"/>
 <path d="M450.9 301.6 a2.5 2.6 0 1 1 4.3 1.9 c-1.3 0.9 -1.8 1.6 -1.8 3" stroke="#111" stroke-width="1.3"/><circle cx="453.4" cy="308.3" r="0.85" fill="#111"/>
 <path d="M202.5 333.5 H515 M176.5 419.5 H515 M202.5 504.5 H515" stroke="#dcdcdc"/>
 <circle cx="123.2" cy="354.8" r="5.8" fill="#fff" stroke="#333" stroke-width="1.15"/>
 <circle cx="123.2" cy="373.6" r="5.8" fill="#fff" stroke="#333" stroke-width="1.15"/>
 <circle cx="123.2" cy="394.5" r="5.8" fill="#fff" stroke="#333" stroke-width="1.15"/><circle cx="123.2" cy="394.5" r="3.6" fill="#333"/>
 <rect x="179.5" y="385.5" width="23" height="19" fill="#fff" stroke="#a0a0a0"/>
 <rect x="117.5" y="434.5" width="12" height="12" fill="#fff" stroke="#cccccc"/><rect x="121" y="438" width="5" height="5" fill="#cccccc"/>
 <rect x="117.5" y="453.5" width="12" height="12" fill="#fff" stroke="#333"/>
 <rect x="117.5" y="518.5" width="286" height="21" fill="#fff" stroke="#a8a8a8" stroke-width="1.6"/>
 <rect x="386.5" y="519.5" width="16" height="19" fill="#e0e0e0" stroke="#c4c4c4" stroke-width="1.2"/>
 <path d="M390.5 527 l4 4 l4 -4" stroke="#555" stroke-width="1.2"/>
 <rect x="357" y="557" width="72" height="20" fill="#e1e1e1" stroke="#0078d7" stroke-width="2"/>
 <rect x="440.5" y="556.5" width="73" height="21" fill="#e1e1e1" stroke="#adadad"/>
 <rect x="92.6" y="281.8" width="439.9" height="312.5" rx="3.5" stroke="#000" stroke-width="3.1"/>
</svg>
<span class="t" style="left:108.2px;top:328.74px;font-size:12px;color:#000;transform:scaleX(0.9496);transform-origin:0 0">Separate fields at</span>
<span class="t" style="left:134.1px;top:349.44px;font-size:12px;color:#000;transform:scaleX(0.9267);transform-origin:0 0"><u>T</u>abs</span>
<span class="t" style="left:134.1px;top:368.34px;font-size:12px;color:#000;transform:scaleX(0.8747);transform-origin:0 0">Co<u>m</u>mas</span>
<span class="t" style="left:134.1px;top:389.44px;font-size:12px;color:#000;transform:scaleX(0.9772);transform-origin:0 0"><u>O</u>ther:</span>
<span class="t" style="left:184px;top:389.44px;font-size:12px;color:#000">-</span>
<span class="t" style="left:108.6px;top:414.64px;font-size:12px;color:#000;transform:scaleX(0.9821);transform-origin:0 0">Sort options</span>
<span class="t" style="left:134.6px;top:435.84px;font-size:12px;color:#8d8d8d;transform:scaleX(0.9634);transform-origin:0 0">Sort column only</span>
<span class="t" style="left:134.6px;top:455.04px;font-size:12px;color:#000;transform:scaleX(0.8982);transform-origin:0 0"><u>C</u>ase sensitive</span>
<span class="t" style="left:108.6px;top:499.74px;font-size:12px;color:#000;transform:scaleX(0.9807);transform-origin:0 0">Sorting <u>l</u>anguage</span>
<span class="t" style="left:120.2px;top:523.84px;font-size:12px;color:#000;transform:scaleX(0.9386);transform-origin:0 0">English (United States)</span>
<span class="t" style="left:385.7px;top:561.84px;font-size:12px;color:#000;transform:scaleX(0.8245);transform-origin:0 0">OK</span>
<span class="t" style="left:460.4px;top:561.84px;font-size:12px;color:#000;transform:scaleX(0.8913);transform-origin:0 0">Cancel</span>
<div class="a" style="left:132px;top:387px;width:37px;height:16px;border:1px dotted #000"></div>
<!-- SORT TEXT DIALOG -->
<div class="a" style="left:676px;top:208px;width:402px;height:310px;background:#f0f0f0;border:1px solid #a8a8a8;box-shadow:0 2px 10px 3px rgba(0,0,0,0.22)"></div>
<div class="a" style="left:677px;top:209px;width:400px;height:30px;background:#fff"></div>
<span class="t" style="left:685px;top:218.24px;font-size:12px;color:#999;transform:scaleX(0.9525);transform-origin:0 0">Sort Text</span>
<svg class="a" style="left:0;top:0" width="1366" height="729" fill="none">
 <path d="M1049 218 l10 10 M1059 218 l-10 10" stroke="#888" stroke-width="1"/>
 <path d="M1006.8 220.8 a2.5 2.6 0 1 1 4.3 1.9 c-1.3 0.9 -1.8 1.6 -1.8 3" stroke="#999" stroke-width="1.2"/><circle cx="1009.3" cy="227.5" r="0.8" fill="#999"/>
 <path d="M724.5 252.5 H1071 M729.5 315.5 H1071 M729.5 378.5 H1071 M742.5 441.5 H1071" stroke="#dcdcdc"/>
 <rect x="692.5" y="272.5" width="151" height="19" fill="#fff" stroke="#a8a8a8" stroke-width="1.6"/>
 <rect x="826.5" y="273.5" width="16.5" height="17" fill="#e0e0e0" stroke="#c4c4c4" stroke-width="1.2"/>
 <path d="M830.5 279.5 l4 4 l4 -4" stroke="#555" stroke-width="1.2"/>
 <rect x="889.5" y="271.5" width="91" height="21" fill="#fff" stroke="#a8a8a8" stroke-width="1.6"/>
 <rect x="963.5" y="272.5" width="16.5" height="19" fill="#e0e0e0" stroke="#c4c4c4" stroke-width="1.2"/>
 <path d="M967.5 279.5 l4 4 l4 -4" stroke="#555" stroke-width="1.2"/>
 <rect x="692.5" y="335.5" width="151" height="19" fill="#f4f4f4" stroke="#a8a8a8" stroke-width="1.6"/>
 <rect x="826.5" y="336.5" width="16.5" height="17" fill="#e0e0e0" stroke="#c4c4c4" stroke-width="1.2"/>
 <path d="M830.5 342.5 l4 4 l4 -4" stroke="#555" stroke-width="1.2"/>
 <rect x="889.5" y="334.5" width="91" height="21" fill="#f0f0f0" stroke="#a8a8a8" stroke-width="1.6"/>
 <rect x="963.5" y="335.5" width="16.5" height="19" fill="#e0e0e0" stroke="#c4c4c4" stroke-width="1.2"/>
 <path d="M967.5 342.5 l4 4 l4 -4" stroke="#555" stroke-width="1.2"/>
 <rect x="692.5" y="398.5" width="151" height="19" fill="#f4f4f4" stroke="#a8a8a8" stroke-width="1.6"/>
 <rect x="826.5" y="399.5" width="16.5" height="17" fill="#e0e0e0" stroke="#c4c4c4" stroke-width="1.2"/>
 <path d="M830.5 405.5 l4 4 l4 -4" stroke="#555" stroke-width="1.2"/>
 <rect x="889.5" y="397.5" width="91" height="21" fill="#f0f0f0" stroke="#a8a8a8" stroke-width="1.6"/>
 <rect x="963.5" y="398.5" width="16.5" height="19" fill="#e0e0e0" stroke="#c4c4c4" stroke-width="1.2"/>
 <path d="M967.5 405.5 l4 4 l4 -4" stroke="#555" stroke-width="1.2"/>
 <circle cx="996.2" cy="273.4" r="5.8" fill="#fff" stroke="#333" stroke-width="1.15"/><circle cx="996.2" cy="273.4" r="3.6" fill="#333"/>
 <circle cx="996.2" cy="292.9" r="5.8" fill="#fff" stroke="#333" stroke-width="1.15"/>
 <circle cx="996.2" cy="336.8" r="5.8" fill="#fff" stroke="#cccccc"/><circle cx="996.2" cy="336.8" r="3.3" fill="#cccccc"/>
 <circle cx="996.2" cy="356.1" r="5.8" fill="#fff" stroke="#cccccc"/>
 <circle cx="996.2" cy="399.8" r="5.8" fill="#fff" stroke="#cccccc"/><circle cx="996.2" cy="399.8" r="3.3" fill="#cccccc"/>
 <circle cx="996.2" cy="419.1" r="5.8" fill="#fff" stroke="#cccccc"/>
 <circle cx="698.3" cy="462.9" r="5.8" fill="#fff" stroke="#333" stroke-width="1.15"/>
 <circle cx="786.9" cy="462.9" r="5.8" fill="#fff" stroke="#333" stroke-width="1.15"/><circle cx="786.9" cy="462.9" r="3.6" fill="#333"/>
 <rect x="684.2" y="489" width="72" height="19.6" fill="#e1e1e1" stroke="#0078d7" stroke-width="2"/>
 <rect x="912.5" y="487.5" width="73" height="21" fill="#e1e1e1" stroke="#adadad"/>
 <rect x="996.5" y="487.5" width="73" height="21" fill="#e1e1e1" stroke="#adadad"/>
 <rect x="678.7" y="483.7" width="81.8" height="30" rx="4" stroke="#000" stroke-width="3"/>
 <path d="M677 500.2 L546 515" stroke="#000" stroke-width="2.6"/>
 <path d="M534 516.5 L550 508.5 L547.5 515 L552 520.5 Z" fill="#000"/>
</svg>
<span class="t" style="left:683.1px;top:247.34px;font-size:12px;color:#000;transform:scaleX(0.9440);transform-origin:0 0"><u>S</u>ort by</span>
<span class="t" style="left:695.4px;top:275.94px;font-size:12px;color:#000;transform:scaleX(0.9219);transform-origin:0 0">Paragraphs</span>
<span class="t" style="left:853.1px;top:276.14px;font-size:12px;color:#000;transform:scaleX(0.9026);transform-origin:0 0">T<u>y</u>pe:</span>
<span class="t" style="left:893.2px;top:276.14px;font-size:12px;color:#000;transform:scaleX(0.9266);transform-origin:0 0">Text</span>
<span class="t" style="left:1007.6px;top:268.64px;font-size:12px;color:#000;transform:scaleX(0.9489);transform-origin:0 0"><u>A</u>scending</span>
<span class="t" style="left:1007.6px;top:287.84px;font-size:12px;color:#000;transform:scaleX(0.9465);transform-origin:0 0"><u>D</u>escending</span>
<span class="t" style="left:683.2px;top:310.14px;font-size:12px;color:#000;transform:scaleX(0.9452);transform-origin:0 0"><u>T</u>hen by</span>
<span class="t" style="left:853.1px;top:339.14px;font-size:12px;color:#8d8d8d;transform:scaleX(0.9026);transform-origin:0 0">Type:</span>
<span class="t" style="left:893.2px;top:339.14px;font-size:12px;color:#8d8d8d;transform:scaleX(0.9266);transform-origin:0 0">Text</span>
<span class="t" style="left:1007.6px;top:331.64px;font-size:12px;color:#8d8d8d;transform:scaleX(0.9492);transform-origin:0 0">Ascending</span>
<span class="t" style="left:1007.6px;top:350.84px;font-size:12px;color:#8d8d8d;transform:scaleX(0.9467);transform-origin:0 0">Descending</span>
<span class="t" style="left:683.2px;top:373.24px;font-size:12px;color:#000;transform:scaleX(0.9452);transform-origin:0 0">Then <u>b</u>y</span>
<span class="t" style="left:853.1px;top:402.14px;font-size:12px;color:#8d8d8d;transform:scaleX(0.9026);transform-origin:0 0">Type:</span>
<span class="t" style="left:893.2px;top:402.14px;font-size:12px;color:#8d8d8d;transform:scaleX(0.9266);transform-origin:0 0">Text</span>
<span class="t" style="left:1007.6px;top:394.64px;font-size:12px;color:#8d8d8d;transform:scaleX(0.9492);transform-origin:0 0">Ascending</span>
<span class="t" style="left:1007.6px;top:413.84px;font-size:12px;color:#8d8d8d;transform:scaleX(0.9467);transform-origin:0 0">Descending</span>
<span class="t" style="left:683.2px;top:435.54px;font-size:12px;color:#000;transform:scaleX(0.9367);transform-origin:0 0">My list has</span>
<span class="t" style="left:709.3px;top:456.74px;font-size:12px;color:#000;transform:scaleX(0.9606);transform-origin:0 0">Header <u>r</u>ow</span>
<span class="t" style="left:798.6px;top:456.74px;font-size:12px;color:#000;transform:scaleX(0.9667);transform-origin:0 0">No header ro<u>w</u></span>
<span class="t" style="left:694.4px;top:491.84px;font-size:12px;color:#000;transform:scaleX(0.9810);transform-origin:0 0"><u>O</u>ptions...</span>
<span class="t" style="left:941.7px;top:491.84px;font-size:12px;color:#000;transform:scaleX(0.8130);transform-origin:0 0">OK</span>
<span class="t" style="left:1016.5px;top:491.84px;font-size:12px;color:#000;transform:scaleX(0.8887);transform-origin:0 0">Cancel</span>
<div id="status" class="a"></div>
<span class="t" style="left:7.3px;top:712.6px;font-size:11.5px;color:#444;transform:scaleX(0.9468);transform-origin:0 0">Page 1 of 1</span>
<span class="t" style="left:84.9px;top:712.6px;font-size:11.5px;color:#444;transform:scaleX(0.9792);transform-origin:0 0">143 of 146 words</span>
<span class="t" style="left:243px;top:712.6px;font-size:11.5px;color:#444;transform:scaleX(1.0046);transform-origin:0 0">Accessibility: Good to go</span>
<span class="t" style="left:1024.4px;top:712.6px;font-size:11.5px;color:#444;transform:scaleX(0.9225);transform-origin:0 0">Focus</span>
<span class="t" style="left:1331.3px;top:712.6px;font-size:11.5px;color:#444;transform:scaleX(0.8905);transform-origin:0 0">106%</span>
<div class="a" style="left:1106px;top:707px;width:40px;height:20px;background:#cfcfcf"></div>
<div class="a" style="left:0;top:727px;width:1366px;height:1px;background:#fff"></div>
<div class="a" style="left:0;top:728px;width:1366px;height:1px;background:#000"></div>
<div class="a" style="left:48px;top:728px;width:344px;height:1px;background:#d4d4d4"></div>
<svg class="a" style="left:0;top:706px" width="1366" height="22" fill="none" stroke="#3b3a39" stroke-width="1">
 <path d="M196 16.5 H191.5 V5.5 H203.5 V11 M197.5 5.5 V12.5 M196.5 14 L199.5 17 L205 11.5"/>
 <circle cx="232" cy="6" r="1.7"/>
 <path d="M226.8 9 q0.3 -2.2 2.5 -1.7 l2.7 0.6 l2.7 -0.6 q2.2 -0.5 2.5 1.7 M230 8 v4 q0 3 -1.3 5 h1.3 M234.3 8 v3.2 M232.5 14 l3 3.3 l5.3 -5.3"/>
<g transform="translate(0,-1)">
 <path d="M1007.5 9.5 v-2 h2 M1007.5 15.5 v2 h2 M1020.5 9.5 v-2 h-2 M1020.5 15.5 v2 h-2 M1011.5 6.5 h4 l2.5 2.5 v9.5 h-6.5 z"/>
 <path d="M1079.5 7.5 h5.5 l1 1 l1 -1 h5.5 v10 h-5.5 l-1 1 l-1 -1 h-5.5 z M1086 8.5 v9 M1081 10 h3 M1081 12.5 h3 M1081 15 h3 M1089 10 h2 M1089 12.5 h2 M1089 15 h2"/>
 <path d="M1120.5 6.5 h10 v13 h-10 z M1122.5 9.5 h6 M1122.5 11.5 h6 M1122.5 13.5 h6 M1122.5 15.5 h6 M1122.5 17.5 h6"/>
 <path d="M1159.5 18.5 v-12 h11 v5 M1161.5 9.5 h7 M1161.5 11.5 h5 M1161.5 13.5 h3"/>
 <circle cx="1169" cy="16" r="4" fill="#f3f2f1"/><path d="M1165 16 h8 M1169 12 v8 M1167 12.5 q-1.5 3.5 0 7 M1171 12.5 q1.5 3.5 0 7"/>
 <path d="M1192.5 10.5 h8 M1310 10.5 h8 M1314 6.5 v8"/>
 <path d="M1205 10.5 h100" stroke="#605e5c"/>
</g>
</svg>
<div class="a" style="left:1254px;top:711px;width:5px;height:10px;background:#605e5c"></div>

<svg class="a" style="left:1280px;top:550px" width="30" height="35"><path d="M12.5 9.5 L12.5 25 L16.3 21.3 L19.3 27.5 L21.7 26.5 L18.9 20.5 L23.5 20.5 Z" fill="#fff" stroke="#111" stroke-width="1.1" stroke-linejoin="round"/></svg>
</body></html>
